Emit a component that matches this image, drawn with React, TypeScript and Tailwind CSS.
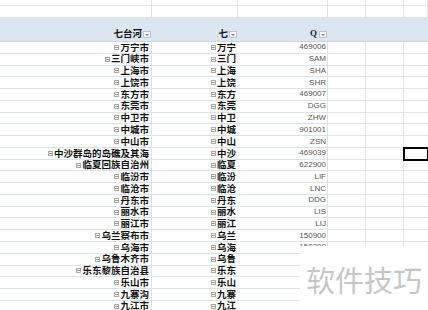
import React from "react";

type Row = { city: string; short: string; code: string };

const rows: Row[] = [
  { city: "万宁市", short: "万宁", code: "469006" },
  { city: "三门峡市", short: "三门", code: "SAM" },
  { city: "上海市", short: "上海", code: "SHA" },
  { city: "上饶市", short: "上饶", code: "SHR" },
  { city: "东方市", short: "东方", code: "469007" },
  { city: "东莞市", short: "东莞", code: "DGG" },
  { city: "中卫市", short: "中卫", code: "ZHW" },
  { city: "中城市", short: "中城", code: "901001" },
  { city: "中山市", short: "中山", code: "ZSN" },
  { city: "中沙群岛的岛礁及其海", short: "中沙", code: "469039" },
  { city: "临夏回族自治州", short: "临夏", code: "622900" },
  { city: "临汾市", short: "临汾", code: "LIF" },
  { city: "临沧市", short: "临沧", code: "LNC" },
  { city: "丹东市", short: "丹东", code: "DDG" },
  { city: "丽水市", short: "丽水", code: "LIS" },
  { city: "丽江市", short: "丽江", code: "LIJ" },
  { city: "乌兰察布市", short: "乌兰", code: "150900" },
  { city: "乌海市", short: "乌海", code: "150300" },
  { city: "乌鲁木齐市", short: "乌鲁", code: "" },
  { city: "乐东黎族自治县", short: "乐东", code: "" },
  { city: "乐山市", short: "乐山", code: "" },
  { city: "九寨沟", short: "九寨", code: "" },
  { city: "九江市", short: "九江", code: "" },
];

const SELECTED = 9;

function Collapse() {
  return (
    <span className="w-[5px] h-[5px] border border-[#a8a8a8] flex items-center justify-center mr-[1px] shrink-0">
      <span className="w-[3px] h-px bg-[#9a9a9a]" />
    </span>
  );
}

function Dropdown() {
  return (
    <span className="w-[8px] h-[7px] border border-[#b9c3cf] bg-[#f4f6f9] flex items-center justify-center ml-[1px] shrink-0">
      <span className="w-0 h-0 border-l-[2px] border-r-[2px] border-t-[2px] border-l-transparent border-r-transparent border-t-[#7a7a7a]" />
    </span>
  );
}

const cjk = "font-['Noto_Sans_CJK_SC',sans-serif]";

export default function App() {
  return (
    <div className="relative w-[428px] h-[310px] overflow-hidden bg-white">
      <div className="grid grid-cols-[152px_86px_90px_38px_38px_1fr]">
        {/* top empty rows */}
        {[0, 1].map((r) =>
          [0, 1, 2, 3, 4, 5].map((c) => (
            <div
              key={`t${r}${c}`}
              className={`${r === 0 ? "h-[6px]" : "h-[12px]"} border-b border-r border-[#e3e3e3]`}
            />
          ))
        )}

        {/* header band */}
        <div className="h-[24px] bg-[#dce6f1] border-b border-[#c9d7e8] flex items-end justify-end pb-[3px] pr-[1px]">
          <span className={`${cjk} font-bold text-[9.5px] leading-none text-[#111]`}>七台河</span>
          <Dropdown />
        </div>
        <div className="h-[24px] bg-[#dce6f1] border-b border-[#c9d7e8] flex items-end justify-end pb-[3px] pr-[1px]">
          <span className={`${cjk} font-bold text-[9.5px] leading-none text-[#111]`}>七</span>
          <Dropdown />
        </div>
        <div className="h-[24px] bg-[#dce6f1] border-b border-[#c9d7e8] flex items-end justify-end pb-[3px] pr-[1px]">
          <span className="font-['Liberation_Serif',serif] font-bold text-[9px] leading-none text-[#222] mr-[1px]">Q</span>
          <Dropdown />
        </div>
        <div className="h-[24px] bg-[#dce6f1] border-b border-[#c9d7e8]" />
        <div className="h-[24px] bg-[#dce6f1] border-b border-[#c9d7e8]" />
        <div className="h-[24px] bg-[#dce6f1] border-b border-[#c9d7e8]" />

        {/* data rows */}
        {rows.map((row, i) => (
          <React.Fragment key={row.short}>
            <div className="h-[11.77px] border-b border-r border-[#dbe2ea] flex items-center justify-end pr-[2px]">
              <Collapse />
              <span className={`${cjk} font-bold text-[9.5px] leading-none text-[#111] whitespace-nowrap`}>{row.city}</span>
            </div>
            <div className="h-[11.77px] border-b border-[#dbe2ea] flex items-center justify-end pr-[2px]">
              <Collapse />
              <span className={`${cjk} font-bold text-[9.5px] leading-none text-[#111] whitespace-nowrap`}>{row.short}</span>
            </div>
            <div className="h-[11.77px] border-b border-r border-[#dbe2ea] flex items-center justify-end pr-[1px]">
              <span className="font-['Liberation_Sans',sans-serif] text-[8px] leading-none text-[#555]">{row.code}</span>
            </div>
            <div className="h-[11.77px] border-b border-r border-[#e3e3e3]" />
            <div className="h-[11.77px] border-b border-r border-[#e3e3e3]" />
            <div
              className={`h-[11.77px] border-b border-[#e3e3e3] ${
                i === SELECTED ? "relative z-10 outline-2 outline-black -outline-offset-1" : ""
              }`}
            />
          </React.Fragment>
        ))}
      </div>

      {/* watermark */}
      <div className="absolute left-[300px] top-[246px] right-0 bottom-0 bg-white flex items-center justify-center pt-[2px]">
        <span className={`${cjk} text-[29px] leading-none text-[#c6c6c6] tracking-[0px]`}>软件技巧</span>
      </div>
    </div>
  );
}
